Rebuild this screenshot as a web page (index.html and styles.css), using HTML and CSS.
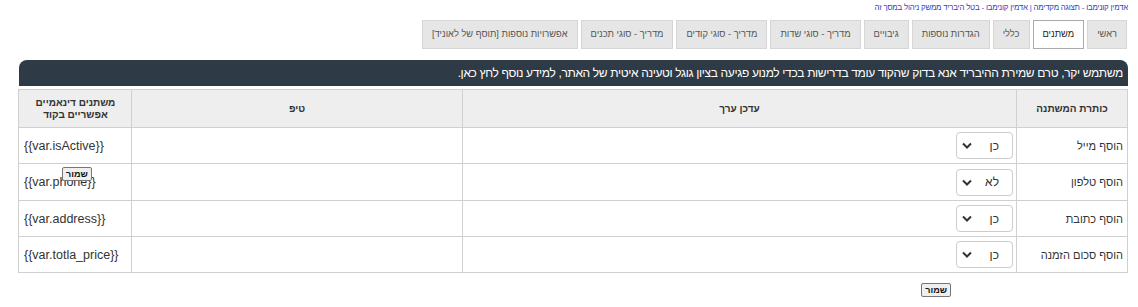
FILE: index.html
```html
<!DOCTYPE html>
<html lang="he" dir="rtl">
<head>
<meta charset="utf-8">
<title>היבריד</title>
<link rel="stylesheet" href="styles.css">
</head>
<body>
<div class="page">
  <div class="toplinks">
    <a href="#">אדמין קונימבו - תצוגה מקדימה</a> | <a href="#">אדמין קונימבו - בטל היבריד ממשק ניהול במסך זה</a>
  </div>
  <ul class="tabs">
    <li class="tab">ראשי</li>
    <li class="tab active">משתנים</li>
    <li class="tab">כללי</li>
    <li class="tab">הגדרות נוספות</li>
    <li class="tab">גיבויים</li>
    <li class="tab">מדריך - סוגי שדות</li>
    <li class="tab">מדריך - סוגי קודים</li>
    <li class="tab">מדריך - סוגי תכנים</li>
    <li class="tab">אפשרויות נוספות [תוסף של לאוניד]</li>
  </ul>
  <div class="notice">משתמש יקר, טרם שמירת ההיבריד אנא בדוק שהקוד עומד בדרישות בכדי למנוע פגיעה בציון גוגל וטעינה איטית של האתר, למידע נוסף לחץ כאן.</div>
  <div class="tablewrap">
    <table class="vars">
      <thead>
        <tr>
          <th class="c-title">כותרת המשתנה</th>
          <th class="c-edit">עדכן ערך</th>
          <th class="c-tip">טיפ</th>
          <th class="c-code">משתנים דינאמיים<br>אפשריים בקוד</th>
        </tr>
      </thead>
      <tbody>
        <tr>
          <td class="c-title">הוסף מייל</td>
          <td class="c-edit"><div class="sel"><span>כן</span><svg width="10" height="7" viewBox="0 0 10 7"><path d="M1 1.5l4 4 4-4" fill="none" stroke="#333" stroke-width="2"/></svg></div></td>
          <td class="c-tip"></td>
          <td class="c-code">{{var.isActive}}</td>
        </tr>
        <tr>
          <td class="c-title">הוסף טלפון</td>
          <td class="c-edit"><div class="sel"><span>לא</span><svg width="10" height="7" viewBox="0 0 10 7"><path d="M1 1.5l4 4 4-4" fill="none" stroke="#333" stroke-width="2"/></svg></div></td>
          <td class="c-tip"></td>
          <td class="c-code">{{var.phone}}</td>
        </tr>
        <tr>
          <td class="c-title">הוסף כתובת</td>
          <td class="c-edit"><div class="sel"><span>כן</span><svg width="10" height="7" viewBox="0 0 10 7"><path d="M1 1.5l4 4 4-4" fill="none" stroke="#333" stroke-width="2"/></svg></div></td>
          <td class="c-tip"></td>
          <td class="c-code">{{var.address}}</td>
        </tr>
        <tr>
          <td class="c-title">הוסף סכום הזמנה</td>
          <td class="c-edit"><div class="sel"><span>כן</span><svg width="10" height="7" viewBox="0 0 10 7"><path d="M1 1.5l4 4 4-4" fill="none" stroke="#333" stroke-width="2"/></svg></div></td>
          <td class="c-tip"></td>
          <td class="c-code">{{var.totla_price}}</td>
        </tr>
      </tbody>
    </table>
    <button class="btn btn-float">שמור</button>
  </div>
  <div class="actions">
    <button class="btn">שמור</button>
  </div>
</div>
</body>
</html>
```

FILE: styles.css
```css
html, body {
  margin: 0;
  padding: 0;
  background: #ffffff;
}
body {
  font-family: "Liberation Sans", Arial, sans-serif;
  font-size: 11px;
  color: #333333;
}
.page {
  padding: 2px 10px 0 19px;
}
.toplinks {
  font-size: 7.8px;
  letter-spacing: -0.18px;
  line-height: 12px;
  color: #2a44c0;
  text-align: right;
}
.toplinks a {
  color: #2a44c0;
  text-decoration: none;
}
.tabs {
  list-style: none;
  margin: 6px 0 0 0;
  padding: 0 1px 0 0;
  display: flex;
  gap: 3px;
}
.tab {
  height: 27px;
  line-height: 27px;
  padding: 0 9px;
  background: #e6e6e6;
  border: 1px solid #d6d6d6;
  color: #555555;
  font-size: 9.3px;
  white-space: nowrap;
}
.tab.active {
  background: #ffffff;
  border-color: #aaaaaa;
  color: #222222;
}
.notice {
  margin-top: 11px;
  height: 26px;
  line-height: 26px;
  background: #2e3a45;
  color: #ffffff;
  border-radius: 8px 8px 0 0;
  padding: 0 5px;
  font-size: 12px;
  letter-spacing: -0.35px;
  white-space: nowrap;
}
.tablewrap {
  position: relative;
  margin-top: 3px;
}
.vars {
  width: 100%;
  border-collapse: collapse;
  table-layout: fixed;
}
.vars th, .vars td {
  border: 1px solid #d0d0d0;
  padding: 0 4px;
}
.vars th {
  background: #eeeeee;
  height: 37px;
  font-size: 10px;
  font-weight: bold;
  line-height: 12px;
  color: #333333;
  text-align: center;
}
.vars td {
  height: 35px;
  font-size: 11px;
}
.vars tbody tr:nth-child(2) td {
  height: 36px;
}
.vars .c-title { width: 102px; }
.vars .c-edit { width: 547px; padding: 0 3px; }
.vars .c-tip { width: 322px; }
.vars .c-code { width: 103px; text-align: left; direction: ltr; font-size: 12.5px; padding-left: 5px; }
.vars th.c-code { direction: rtl; text-align: center; font-size: 10px; }
.sel {
  height: 25px;
  border: 1px solid #cccccc;
  border-radius: 4px;
  display: flex;
  align-items: center;
  justify-content: space-between;
  padding: 0 13px 0 5px;
  box-sizing: content-box;
  width: 37px;
  font-size: 12px;
  color: #333;
}
.btn {
  font-family: "Liberation Sans", Arial, sans-serif;
  font-size: 9px;
  font-weight: bold;
  height: 14px;
  line-height: 10px;
  padding: 0 3px;
  background: #efefef;
  border: 1px solid #767676;
  border-radius: 2px;
  color: #111;
}
.btn-float {
  position: absolute;
  left: 43px;
  top: 78px;
}
.actions {
  display: flex;
  margin-top: 10px;
  padding-right: 177px;
}
```
